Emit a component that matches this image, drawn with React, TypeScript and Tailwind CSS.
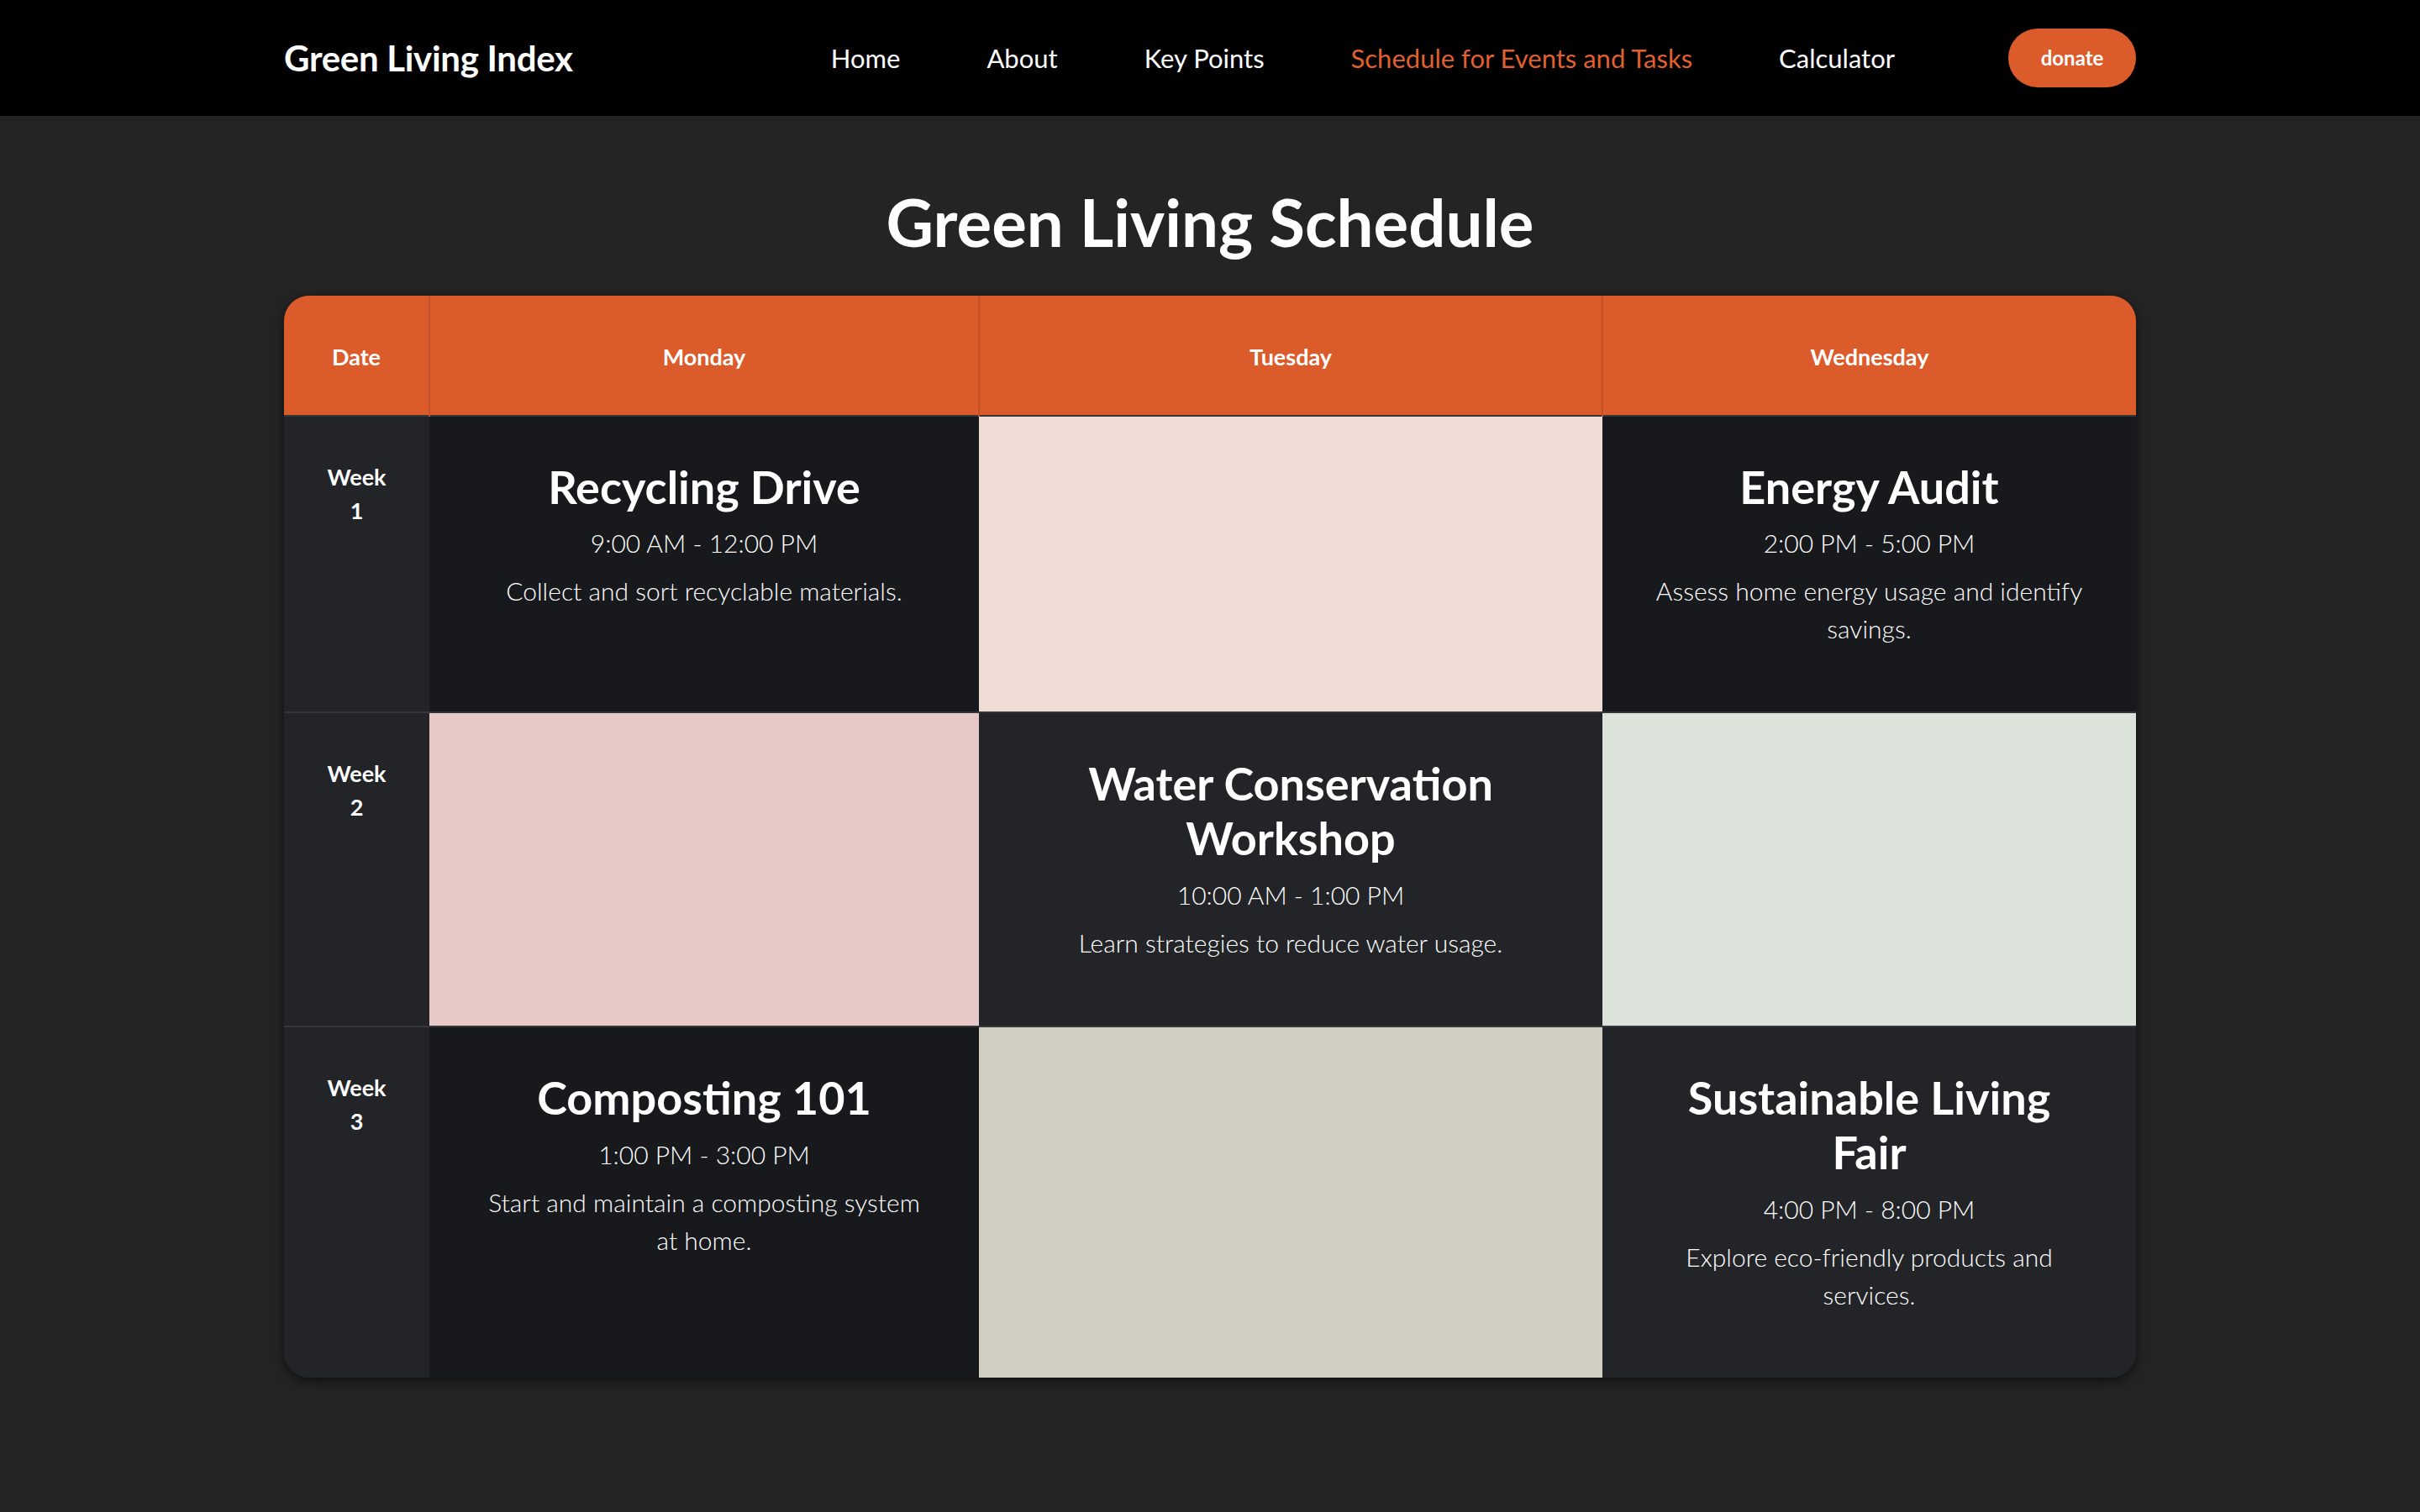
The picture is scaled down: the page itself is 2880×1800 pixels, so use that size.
import React from "react";

type Cell =
  | { kind: "event"; title: string; time: string; desc: string; bg: string }
  | { kind: "empty"; bg: string };

const rows: { week: string; cells: Cell[] }[] = [
  {
    week: "1",
    cells: [
      {
        kind: "event",
        title: "Recycling Drive",
        time: "9:00 AM - 12:00 PM",
        desc: "Collect and sort recyclable materials.",
        bg: "bg-[#18191d]",
      },
      { kind: "empty", bg: "bg-[#f0ddd6]" },
      {
        kind: "event",
        title: "Energy Audit",
        time: "2:00 PM - 5:00 PM",
        desc: "Assess home energy usage and identify savings.",
        bg: "bg-[#18191d]",
      },
    ],
  },
  {
    week: "2",
    cells: [
      { kind: "empty", bg: "bg-[#e6c9c7]" },
      {
        kind: "event",
        title: "Water Conservation Workshop",
        time: "10:00 AM - 1:00 PM",
        desc: "Learn strategies to reduce water usage.",
        bg: "bg-[#222428]",
      },
      { kind: "empty", bg: "bg-[#dce3da]" },
    ],
  },
  {
    week: "3",
    cells: [
      {
        kind: "event",
        title: "Composting 101",
        time: "1:00 PM - 3:00 PM",
        desc: "Start and maintain a composting system at home.",
        bg: "bg-[#18191d]",
      },
      { kind: "empty", bg: "bg-[#d1cfc2]" },
      {
        kind: "event",
        title: "Sustainable Living Fair",
        time: "4:00 PM - 8:00 PM",
        desc: "Explore eco-friendly products and services.",
        bg: "bg-[#222428]",
      },
    ],
  },
];

const links = ["Home", "About", "Key Points", "Schedule for Events and Tasks", "Calculator"];

function Navbar() {
  return (
    <nav className="bg-black h-[138px]">
      <div className="w-[2204px] mx-auto h-full flex items-center justify-between">
        <a href="#" className="text-white font-bold text-[42px] tracking-[-0.3px]">
          Green Living Index
        </a>
        <div className="flex items-center">
          <ul className="flex items-center gap-[103px]">
            {links.map((l) => (
              <li key={l}>
                <a
                  href="#"
                  className={
                    l === "Schedule for Events and Tasks"
                      ? "text-[31px] text-[#e0602f]"
                      : "text-[31px] text-white"
                  }
                >
                  {l}
                </a>
              </li>
            ))}
          </ul>
          <button className="ml-[135px] w-[152px] h-[70px] rounded-full bg-[#db5b2a] text-white font-bold text-[24px]">
            donate
          </button>
        </div>
      </div>
    </nav>
  );
}

export default function App() {
  return (
    <div className="min-h-screen bg-[#242424] font-[Lato,sans-serif]">
      <Navbar />
      <main className="w-[2204px] mx-auto pt-[80px] pb-[120px]">
        <h1 className="text-center text-white font-bold text-[78px] leading-[1.2] mb-[40px]">
          Green Living Schedule
        </h1>
        <div className="rounded-[30px] overflow-hidden shadow-[0_4px_14px_rgba(0,0,0,0.55)]">
          <table className="w-full table-fixed border-collapse">
            <colgroup>
              <col className="w-[173px]" />
              <col className="w-[654px]" />
              <col className="w-[742px]" />
              <col className="w-[635px]" />
            </colgroup>
            <thead>
              <tr className="bg-[#db5b2a] h-[143px]">
                {["Date", "Monday", "Tuesday", "Wednesday"].map((d, i) => (
                  <th
                    key={d}
                    className={
                      i === 0
                        ? "text-white font-bold text-[27px] pt-[5px]"
                        : "text-white font-bold text-[27px] pt-[5px] border-l-2 border-[#c2512a]"
                    }
                  >
                    {d}
                  </th>
                ))}
              </tr>
            </thead>
            <tbody>
              {rows.map((r) => (
                <tr key={r.week}>
                  <td className="bg-[#222428] align-top text-center text-white font-bold text-[27px] leading-[40px] pt-[52px] border-t-2 border-[#33363b]">
                    Week
                    <br />
                    {r.week}
                  </td>
                  {r.cells.map((c, i) =>
                    c.kind === "empty" ? (
                      <td key={i} className={`${c.bg} border-t-2 border-[#33363b]`} />
                    ) : (
                      <td
                        key={i}
                        className={`${c.bg} align-top text-center text-white px-[56px] pt-[52px] pb-[76px] border-t-2 border-[#33363b]`}
                      >
                        <h3 className="font-bold text-[54px] leading-[1.2] mb-[12px]">{c.title}</h3>
                        <p className="font-light text-[30px] leading-[45px] mb-[12px]">{c.time}</p>
                        <p className="font-light text-[30px] leading-[45px]">{c.desc}</p>
                      </td>
                    )
                  )}
                </tr>
              ))}
            </tbody>
          </table>
        </div>
      </main>
    </div>
  );
}
